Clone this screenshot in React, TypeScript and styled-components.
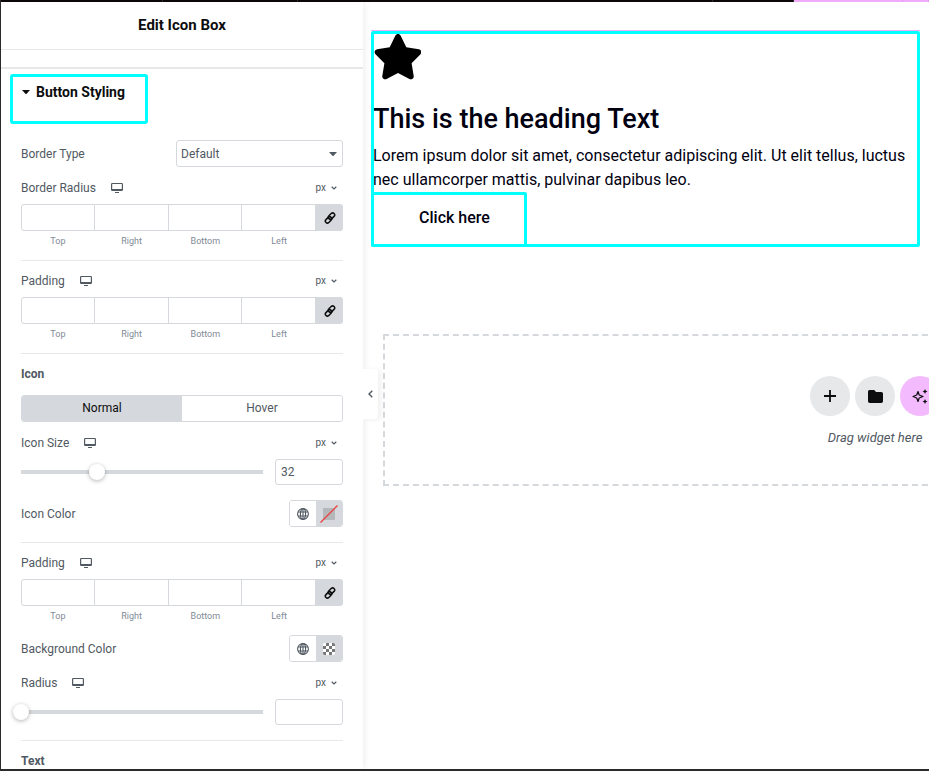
import React, { useId, useState } from "react";
import styled, { createGlobalStyle } from "styled-components";

const GlobalStyle = createGlobalStyle`
  *, *::before, *::after { box-sizing: border-box; }
  body { margin: 0; font-family: Roboto, "Liberation Sans", sans-serif; font-size: 12px; color: #515962; background: #fff; }
  button, input, select { font: inherit; color: inherit; margin: 0; padding: 0; }
  h1, h2, h3, p { margin: 0; }
  svg { display: block; }
`;

const Shell = styled.div`
  height: 100vh;
  display: flex;
  flex-direction: column;
  overflow: hidden;
  border-left: 1px solid #2b2b2e;
  border-bottom: 2px solid #2b2b2e;
`;

const TopBar = styled.div`
  flex: none;
  height: 2px;
  display: flex;
  background: #0c0809;
`;

const TopSegment = styled.span<{ $grow: number; $pink?: boolean }>`
  flex: ${(p) => p.$grow} 1 0;
  background: ${(p) => (p.$pink ? "#f0abfc" : "transparent")};
  border-right: 1px solid ${(p) => (p.$pink ? "#e59af2" : "#2b2b2e")};
`;

const Workspace = styled.div`
  flex: 1;
  min-height: 0;
  display: flex;
`;

const Panel = styled.aside`
  position: relative;
  z-index: 1;
  flex: none;
  width: 362px;
  display: flex;
  flex-direction: column;
  background: #fff;
  box-shadow: 0 0 8px rgba(0, 0, 0, 0.1);
`;

const PanelHeader = styled.header`
  flex: none;
  padding: 11px 0 12px;
  border-bottom: 1px solid #e6e8ea;
  text-align: center;
`;

const PanelTitle = styled.h1`
  font-size: 15px;
  line-height: 24px;
  font-weight: 700;
  color: #0c0d0e;
`;

const PanelGap = styled.div`
  flex: none;
  height: 19px;
  border-bottom: 2px solid #e6e8ea;
`;

const Controls = styled.div`
  flex: 1;
  min-height: 0;
  overflow: hidden;
  padding: 5px 20px 0;
`;

const SectionButton = styled.button`
  display: flex;
  align-items: center;
  gap: 6px;
  width: 138px;
  height: 50px;
  margin-left: -11px;
  padding: 0 0 14px 9px;
  border: 3px solid #00ffff;
  border-radius: 3px;
  background: none;
  color: #0c0d0e;
  font-size: 14px;
  font-weight: 700;
`;

const Row = styled.div<{ $top: number }>`
  display: flex;
  align-items: center;
  justify-content: space-between;
  margin-top: ${(p) => p.$top}px;
`;

const LabelGroup = styled.div`
  display: flex;
  align-items: center;
  gap: 15px;
`;

const Label = styled.label`
  line-height: 16px;
`;

const IconButton = styled.button`
  display: flex;
  border: 0;
  background: none;
`;

const UnitButton = styled.button`
  display: flex;
  align-items: center;
  gap: 5px;
  margin-right: 6px;
  border: 0;
  background: none;
  font-size: 10px;
  line-height: 16px;
`;

const SelectWrap = styled.div`
  display: grid;
  width: 167px;
  align-items: center;
  & > * { grid-area: 1 / 1; }
  svg { justify-self: end; margin-right: 6px; pointer-events: none; }
`;

const Select = styled.select`
  appearance: none;
  width: 100%;
  height: 27px;
  padding: 0 4px;
  border: 1px solid #d5d8dc;
  border-radius: 3px;
  background: #fff;
`;

const SidesGrid = styled.div`
  display: flex;
  align-items: flex-start;
  margin-top: 8px;
`;

const Side = styled.div`
  flex: 1;
  display: flex;
  flex-direction: column;
  gap: 4px;
  text-align: center;
  font-size: 9px;
  line-height: 12px;
  color: #818a96;
  &:not(:first-child) input { border-left: 0; border-radius: 0; }
`;

const SideInput = styled.input`
  width: 100%;
  height: 27px;
  border: 1px solid #d5d8dc;
  border-radius: 3px 0 0 3px;
  text-align: center;
`;

const LinkButton = styled.button`
  display: flex;
  align-items: center;
  justify-content: center;
  width: 27px;
  height: 27px;
  border: 0;
  border-radius: 0 3px 3px 0;
  background: #d5d8dc;
  color: #0c0d0e;
`;

const Divider = styled.hr<{ $top?: number }>`
  height: 1px;
  margin: ${(p) => p.$top ?? 13}px 0 0;
  border: 0;
  background: #e6e8ea;
`;

const GroupHeading = styled.h2`
  margin-top: 12px;
  font-size: 12px;
  line-height: 16px;
  font-weight: 700;
`;

const Tabs = styled.div`
  display: flex;
  height: 27px;
  margin-top: 13px;
  border: 1px solid #d5d8dc;
  border-radius: 3px;
  overflow: hidden;
`;

const Tab = styled.button<{ $active?: boolean }>`
  flex: 1;
  padding-bottom: 2px;
  border: 0;
  background: ${(p) => (p.$active ? "#d5d8dc" : "#fff")};
  color: ${(p) => (p.$active ? "#0c0d0e" : "#515962")};
`;

const SliderRow = styled.div`
  display: flex;
  align-items: center;
  gap: 4px;
  margin: 8px 0 0 -8px;
`;

const Range = styled.input`
  appearance: none;
  flex: 1;
  min-width: 0;
  height: 16px;
  background: linear-gradient(#d5d8dc, #d5d8dc) center / calc(100% - 16px) 4px no-repeat;
  &::-webkit-slider-thumb {
    appearance: none;
    width: 16px;
    height: 16px;
    border-radius: 50%;
    background: #fff;
    box-shadow: 0 1px 4px rgba(0, 0, 0, 0.3);
  }
`;

const NumberInput = styled.input`
  width: 68px;
  height: 26px;
  padding: 0 5px;
  border: 1px solid #d5d8dc;
  border-radius: 3px;
`;

const ColorGroup = styled.div`
  display: flex;
  width: 54px;
  height: 27px;
  border: 1px solid #d5d8dc;
  border-radius: 3px;
  overflow: hidden;
`;

const ColorButton = styled.button<{ $filled?: boolean }>`
  flex: 1;
  display: flex;
  align-items: center;
  justify-content: center;
  border: 0;
  background: ${(p) => (p.$filled ? "#d5d8dc" : "#fff")};
`;

const CollapseHandle = styled.button`
  position: absolute;
  left: 100%;
  top: 367px;
  width: 15px;
  height: 50px;
  display: flex;
  align-items: center;
  justify-content: center;
  border: 0;
  border-radius: 0 3px 3px 0;
  background: #fff;
  box-shadow: 3px 1px 5px rgba(0, 0, 0, 0.06);
`;

const Preview = styled.main`
  flex: 1;
  min-width: 0;
  overflow: hidden;
  padding: 28px 9px 0 8px;
`;

const IconBox = styled.section`
  position: relative;
  padding: 3px 5px 0 2px;
  border-top: 1px solid #f0abfc;
  color: #000010;
  &::after {
    content: "";
    position: absolute;
    inset: 0;
    border: 3px solid #00ffff;
    border-radius: 2px;
    pointer-events: none;
  }
`;

const BoxTitle = styled.h3`
  margin-top: 18px;
  font-size: 27px;
  line-height: 38px;
  font-weight: 500;
`;

const BoxText = styled.p`
  margin-top: 6px;
  font-size: 16px;
  line-height: 24px;
`;

const BoxButton = styled.button`
  display: block;
  width: 156px;
  height: 55px;
  margin-left: -2px;
  padding: 0 0 4px 11px;
  border: 3px solid #00ffff;
  border-radius: 2px;
  background: none;
  font-size: 16px;
  font-weight: 500;
`;

const DropZone = styled.section`
  width: 984px;
  margin: 87px 0 0 12px;
  padding: 40px 0 37px;
  border: 2px dashed #d5d8dc;
  display: flex;
  flex-direction: column;
  align-items: center;
  gap: 13px;
`;

const ActionRow = styled.div`
  display: flex;
  gap: 5px;
`;

const RoundButton = styled.button<{ $pink?: boolean }>`
  display: flex;
  align-items: center;
  justify-content: center;
  width: 40px;
  height: 40px;
  border: 0;
  border-radius: 50%;
  background: ${(p) => (p.$pink ? "#f3bafd" : "#e6e8ea")};
  color: #0c0d0e;
`;

const DropText = styled.p`
  font-size: 13px;
  line-height: 18px;
  font-style: italic;
`;

const Caret = () => (
  <svg width="8" height="4" viewBox="0 0 8 4" fill="currentColor"><path d="M0 0h8L4.400 4h-.8z" /></svg>
);
const Desktop = () => (
  <svg width="12" height="10" viewBox="0 0 12 10" fill="currentColor">
    <path fillRule="evenodd" d="M1.200 0h9.600Q12 0 12 1.200v5.600Q12 8 10.800 8H1.200Q0 8 0 6.800V1.200Q0 0 1.200 0zM1.200 1v5h9.600V1z" />
    <path d="M4 9h4v1H4z" />
  </svg>
);
const SmallChevron = () => (
  <svg width="6" height="4" viewBox="0 0 6 4" fill="none" stroke="currentColor" strokeWidth="1.200"><path d="M.7.7 3 2.900 5.300.7" /></svg>
);
const ChainLink = () => (
  <svg width="12" height="12" viewBox="0 0 12 12" fill="none" stroke="currentColor" strokeWidth="1.500">
    <g transform="rotate(-45 6 6)">
      <rect x="0" y="4.300" width="7.200" height="4" rx="2" />
      <rect x="4.800" y="3.700" width="7.200" height="4" rx="2" />
    </g>
  </svg>
);
const Globe = () => (
  <svg width="12" height="12" viewBox="0 0 12 12" fill="none" stroke="currentColor" strokeWidth="1.100">
    <circle cx="6" cy="6" r="5.400" />
    <ellipse cx="6" cy="6" rx="2.600" ry="5.400" />
    <path d="M1 4h10M1 8h10M6 .5v11" />
  </svg>
);
const EmptySwatch = () => (
  <svg width="18" height="18" viewBox="0 0 18 18">
    <rect x="3" y="3" width="12" height="12" rx="1" fill="#b5b8bb" />
    <path d="M.5 17.500 17.500.5" stroke="#ee3f3f" strokeWidth="1.300" />
  </svg>
);
const CheckerSwatch = () => {
  const id = useId();
  return (
    <svg width="12" height="12" viewBox="0 0 12 12">
      <defs>
        <pattern id={id} width="6" height="6" patternUnits="userSpaceOnUse">
          <path fill="#fff" d="M0 0h6v6H0z" />
          <path fill="#777" d="M3 0h3v3H3zM0 3h3v3H0z" />
        </pattern>
      </defs>
      <rect width="12" height="12" rx="2" fill={`url(#${id})`} />
    </svg>
  );
};
const Star = () => (
  <svg width="48" height="48" viewBox="0 0 48 48" fill="#000">
    <path d="M22.300 1.800c1.100-2.300 4.300-2.300 5.400 0l5.600 11.500 12.500 1.900c2.500.4 3.400 3.300 1.700 5.100l-8.900 8.900 2.100 12.700c.4 2.400-2.100 4.200-4.300 3.100L25 39l-11.400 6c-2.200 1.100-4.700-.7-4.300-3.100l2.100-12.700-8.900-8.900c-1.700-1.800-.8-4.700 1.700-5.100l12.500-1.900z" />
  </svg>
);
const Plus = () => (
  <svg width="12" height="12" viewBox="0 0 12 12" stroke="currentColor" strokeWidth="1.800"><path d="M6 0v12M0 6h12" /></svg>
);
const Folder = () => (
  <svg width="15" height="13" viewBox="0 0 15 13" fill="currentColor">
    <path d="M1.500 0h4.300q.6 0 1 .5L8 2h5.300Q15 2 15 3.600v7.700q0 1.700-1.700 1.700H1.700Q0 13 0 11.300V1.500Q0 0 1.500 0z" />
  </svg>
);
const Sparkles = () => (
  <svg width="16" height="16" viewBox="0 0 16 16" fill="currentColor">
    <path d="M6 3.500 7.200 7 11 8.500 7.200 10 6 13.500 4.700 10 1 8.500 4.700 7z" fill="none" stroke="currentColor" strokeWidth="1.200" strokeLinejoin="round" />
    <path d="m13 1 .8 1.700 1.700.8-1.700.8L13 6l-.8-1.700-1.700-.8 1.700-.8zM13 11l.8 1.700 1.700.8-1.700.8L13 16l-.8-1.700-1.700-.8 1.700-.8z" />
  </svg>
);
const CollapseIcon = () => (
  <svg width="5" height="8" viewBox="0 0 5 8" fill="none" stroke="currentColor" strokeWidth="1.400"><path d="M4.300.8 1 4l3.300 3.200" /></svg>
);

function UnitRow({ label, htmlFor, top }: { label: string; htmlFor: string; top: number }) {
  return (
    <Row $top={top}>
      <LabelGroup>
        <Label htmlFor={htmlFor}>{label}</Label>
        <IconButton type="button" aria-label="Desktop"><Desktop /></IconButton>
      </LabelGroup>
      <UnitButton type="button">px <SmallChevron /></UnitButton>
    </Row>
  );
}

function Dimensions({ label, top }: { label: string; top: number }) {
  const id = useId();
  return (
    <>
      <UnitRow label={label} htmlFor={`${id}-Top`} top={top} />
      <SidesGrid>
        {["Top", "Right", "Bottom", "Left"].map((side) => (
          <Side key={side}>
            <SideInput id={`${id}-${side}`} type="text" />
            <label htmlFor={`${id}-${side}`}>{side}</label>
          </Side>
        ))}
        <LinkButton type="button" aria-label="Link values"><ChainLink /></LinkButton>
      </SidesGrid>
    </>
  );
}

function Slider({ label, initial, top }: { label: string; initial: string; top: number }) {
  const id = useId();
  const [value, setValue] = useState(initial);
  return (
    <>
      <UnitRow label={label} htmlFor={id} top={top} />
      <SliderRow>
        <Range type="range" min={0} max={102} aria-label={label} value={value || "0"} onChange={(e) => setValue(e.target.value)} />
        <NumberInput id={id} type="text" inputMode="numeric" value={value} onChange={(e) => setValue(e.target.value)} />
      </SliderRow>
    </>
  );
}

function ColorRow({ label, top, children }: { label: string; top: number; children: React.ReactNode }) {
  const id = useId();
  return (
    <Row $top={top}>
      <Label htmlFor={id}>{label}</Label>
      <ColorGroup>
        <ColorButton type="button" aria-label="Global colors"><Globe /></ColorButton>
        <ColorButton id={id} type="button" $filled>{children}</ColorButton>
      </ColorGroup>
    </Row>
  );
}

export default function App() {
  return (
    <>
      <GlobalStyle />
      <Shell>
        <TopBar>
          <TopSegment $grow={162} />
          <TopSegment $grow={135} />
          <TopSegment $grow={417} />
          <TopSegment $grow={80} />
          <TopSegment $grow={109} $pink />
          <TopSegment $grow={25} $pink />
        </TopBar>
        <Workspace>
          <Panel>
            <PanelHeader><PanelTitle>Edit Icon Box</PanelTitle></PanelHeader>
            <PanelGap />
            <Controls>
              <SectionButton type="button" aria-expanded="true"><Caret />Button Styling</SectionButton>
              <Row $top={16}>
                <Label htmlFor="border-type">Border Type</Label>
                <SelectWrap>
                  <Select id="border-type"><option>Default</option></Select>
                  <Caret />
                </SelectWrap>
              </Row>
              <Dimensions label="Border Radius" top={13} />
              <Divider />
              <Dimensions label="Padding" top={12} />
              <Divider />
              <GroupHeading>Icon</GroupHeading>
              <Tabs role="tablist">
                <Tab type="button" role="tab" aria-selected="true" $active>Normal</Tab>
                <Tab type="button" role="tab" aria-selected="false">Hover</Tab>
              </Tabs>
              <Slider label="Icon Size" initial="32" top={13} />
              <ColorRow label="Icon Color" top={15}><EmptySwatch /></ColorRow>
              <Divider $top={15} />
              <Dimensions label="Padding" top={12} />
              <ColorRow label="Background Color" top={13}><CheckerSwatch /></ColorRow>
              <Slider label="Radius" initial="" top={13} />
              <Divider $top={15} />
              <GroupHeading>Text</GroupHeading>
            </Controls>
            <CollapseHandle type="button" aria-label="Collapse panel"><CollapseIcon /></CollapseHandle>
          </Panel>
          <Preview>
            <IconBox>
              <Star />
              <BoxTitle>This is the heading Text</BoxTitle>
              <BoxText>
                Lorem ipsum dolor sit amet, consectetur adipiscing elit. Ut elit tellus, luctus nec ullamcorper mattis, pulvinar dapibus leo.
              </BoxText>
              <BoxButton type="button">Click here</BoxButton>
            </IconBox>
            <DropZone>
              <ActionRow>
                <RoundButton type="button" aria-label="Add"><Plus /></RoundButton>
                <RoundButton type="button" aria-label="Templates"><Folder /></RoundButton>
                <RoundButton type="button" aria-label="Generate" $pink><Sparkles /></RoundButton>
              </ActionRow>
              <DropText>Drag widget here</DropText>
            </DropZone>
          </Preview>
        </Workspace>
      </Shell>
    </>
  );
}
